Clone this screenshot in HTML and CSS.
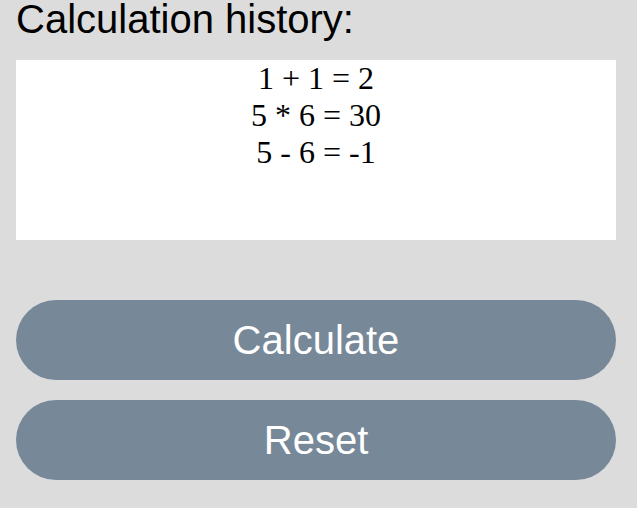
FILE: index.html
```html
<!DOCTYPE html>
<html>
<head>
<meta charset="utf-8">
<link rel="stylesheet" href="styles.css">
</head>
<body>
<div class="page">
  <h1 class="title">Calculation history:</h1>
  <div class="history">
    <div class="entry">1 + 1 = 2</div>
    <div class="entry">5 * 6 = 30</div>
    <div class="entry">5 - 6 = -1</div>
  </div>
  <div class="actions">
    <button class="btn">Calculate</button>
    <button class="btn">Reset</button>
  </div>
</div>
</body>
</html>
```
FILE: styles.css
```css
html, body {
  margin: 0;
  padding: 0;
  background: #dcdcdc;
}
.page {
  padding: 0 21px 0 16px;
  display: flex;
  flex-direction: column;
}
.title {
  margin: 0 0 22px 0;
  font-family: "Liberation Sans", Arial, sans-serif;
  font-weight: normal;
  font-size: 40px;
  line-height: 38px;
  color: #000;
}
.history {
  background: #fff;
  height: 180px;
  font-family: "Liberation Serif", "Times New Roman", serif;
  font-size: 32px;
  line-height: 37px;
  text-align: center;
  color: #000;
}
.actions {
  margin-top: 60px;
  display: flex;
  flex-direction: column;
  gap: 20px;
}
.btn {
  height: 80px;
  border: none;
  border-radius: 40px;
  background: #778899;
  color: #fff;
  font-family: "Liberation Sans", Arial, sans-serif;
  font-size: 40px;
  padding: 0;
}
```
